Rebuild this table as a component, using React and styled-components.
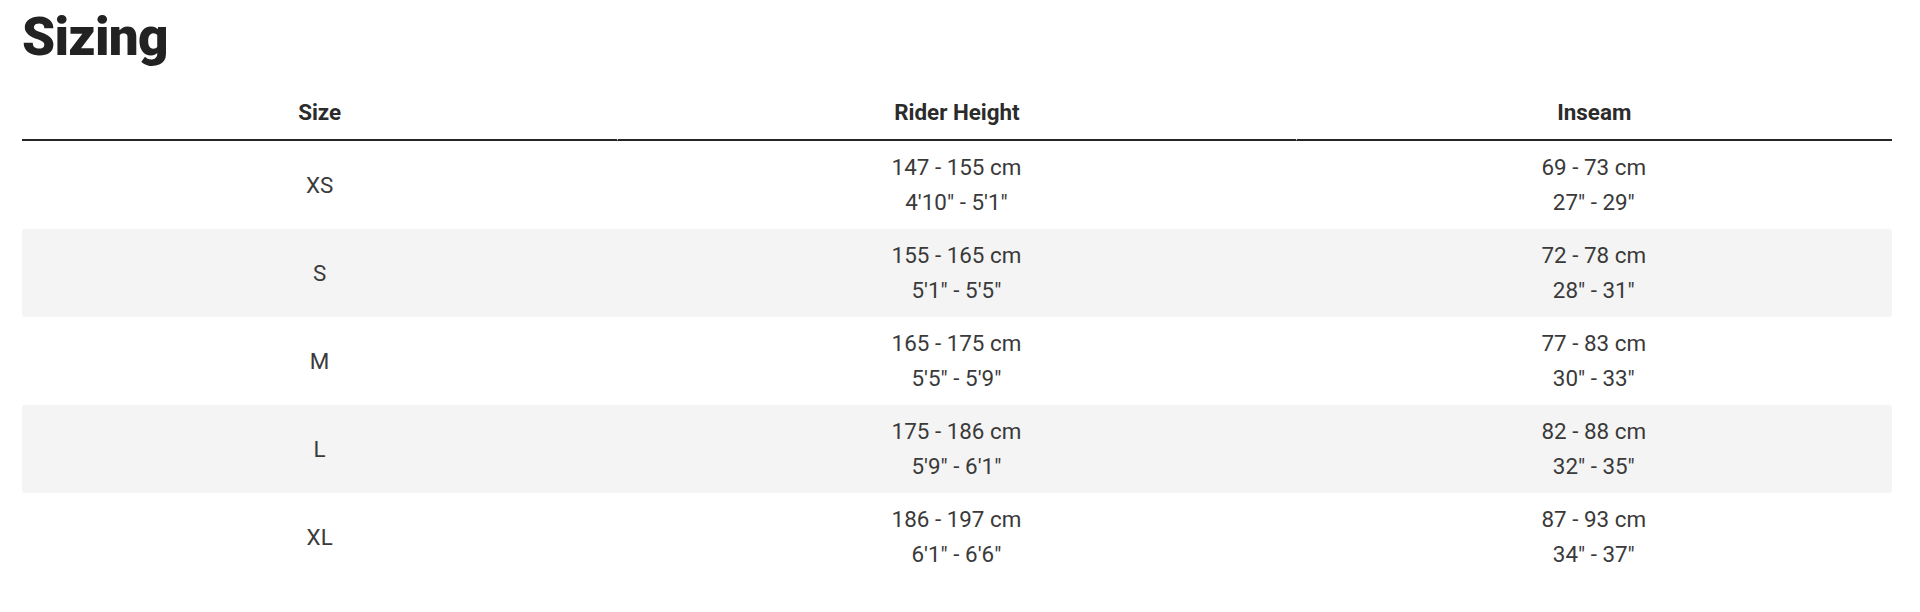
import React from "react";
import styled, { createGlobalStyle } from "styled-components";

const GlobalStyle = createGlobalStyle`
    body {
      margin: 0;
      background: #fff;
      font-family: Roboto, "Liberation Sans", sans-serif;
    }
  `,
  Page = styled.div`
    padding: 11px 28px 0 22px;
  `,
  Title = styled.h2`
    margin: 0 0 26px;
    font-size: 53px;
    line-height: 53px;
    font-weight: 900;
    letter-spacing: -0.7px;
    color: #222;
  `,
  Table = styled.table`
    width: 100%;
    border-collapse: separate;
    border-spacing: 0;
    font-size: 22.4px;
    color: #3a3a3a;
  `,
  Head = styled.th`
    width: ${(p) => p.$w};
    padding: 7px 0 12px;
    line-height: 30px;
    font-weight: 700;
    color: #2b2b2b;
    text-align: center;
    border-bottom: 2px solid #262626;

    & + & {
      border-left: 1px solid #fff;
    }
  `,
  Row = styled.tr`
    background: ${(p) => (p.$shade ? "#f4f4f4" : "transparent")};

    td:first-child {
      border-radius: 3px 0 0 3px;
    }
    td:last-child {
      border-radius: 0 3px 3px 0;
    }
  `,
  Cell = styled.td`
    height: 88px;
    padding: 0;
    text-align: center;
    vertical-align: middle;
    line-height: 35px;
    font-weight: 400;
  `,
  Line = styled.div`
    white-space: nowrap;
  `;

const sizes = [
  { size: "XS", cm: "147 - 155 cm", ft: "4'10\" - 5'1\"", inCm: "69 - 73 cm", inIn: "27\" - 29\"" },
  { size: "S", cm: "155 - 165 cm", ft: "5'1\" - 5'5\"", inCm: "72 - 78 cm", inIn: "28\" - 31\"" },
  { size: "M", cm: "165 - 175 cm", ft: "5'5\" - 5'9\"", inCm: "77 - 83 cm", inIn: "30\" - 33\"" },
  { size: "L", cm: "175 - 186 cm", ft: "5'9\" - 6'1\"", inCm: "82 - 88 cm", inIn: "32\" - 35\"" },
  { size: "XL", cm: "186 - 197 cm", ft: "6'1\" - 6'6\"", inCm: "87 - 93 cm", inIn: "34\" - 37\"" }
];

export default function App() {
  return (
    <Page>
      <GlobalStyle />
      <Title>Sizing</Title>
      <Table>
        <thead>
          <tr>
            <Head $w="596px">Size</Head>
            <Head $w="678px">Rider Height</Head>
            <Head $w="596px">Inseam</Head>
          </tr>
        </thead>
        <tbody>
          {sizes.map((s, i) => (
            <Row key={s.size} $shade={i % 2 === 1}>
              <Cell>{s.size}</Cell>
              <Cell>
                <Line>{s.cm}</Line>
                <Line>{s.ft}</Line>
              </Cell>
              <Cell>
                <Line>{s.inCm}</Line>
                <Line>{s.inIn}</Line>
              </Cell>
            </Row>
          ))}
        </tbody>
      </Table>
    </Page>
  );
}
